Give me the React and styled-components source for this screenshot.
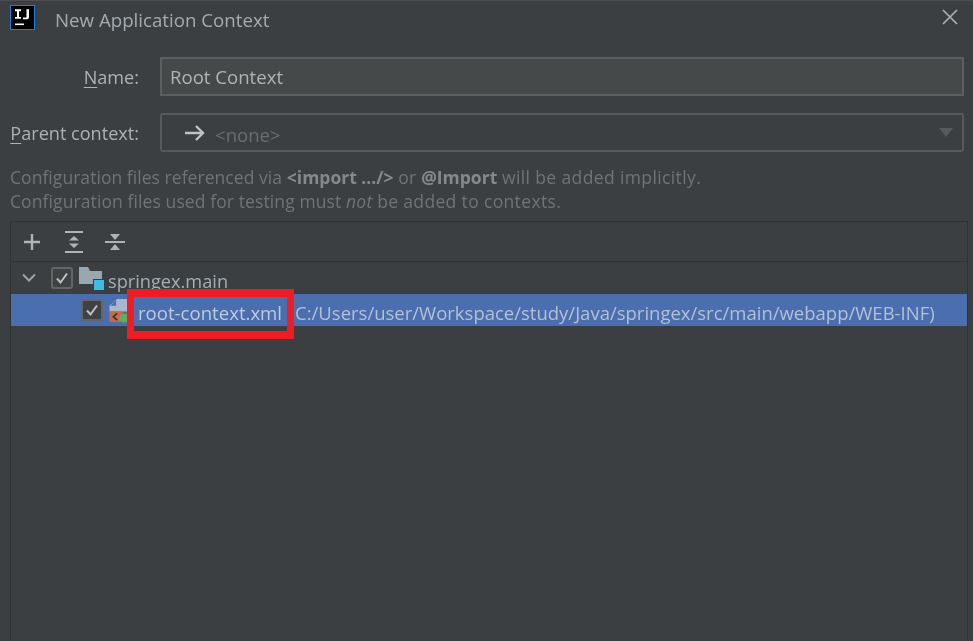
import React from "react";
import styled, { createGlobalStyle } from "styled-components";

const Global = createGlobalStyle`
  html, body { margin: 0; padding: 0; background: #3c3f41; }
  body { font-family: "Open Sans", "Noto Sans", "Liberation Sans", sans-serif; overflow: hidden; }
`;
const Dialog = styled.div`
  width: 973px; height: 641px; box-sizing: border-box; background: #3c3f41; filter: blur(0.35px);
  border-top: 1px solid #4c4f51; display: flex; flex-direction: column; color: #bbbbbb; overflow: hidden;
`;
const TitleBar = styled.header`
  height: 40px; flex: none; display: flex; align-items: center; padding: 0 14px 0 10px; margin-top: -1px;
`;
const Logo = styled.div`
  width: 25px; height: 25px; box-sizing: border-box; background: #000; border: 1px solid #1c7fe0;
  display: block; flex: none; align-self: flex-start; margin-top: 5px;
`;
const Title = styled.h1`
  margin: 0 0 2px 20px; font-size: 18.7px; font-weight: 400; color: #a4abb0; flex: 1;
`;
const CloseBtn = styled.div`
  width: 18px; height: 18px; flex: none; color: #b0b2b3; display: flex; align-self: flex-start; margin-top: 8px;
`;
const Form = styled.div`
  display: grid; grid-template-columns: 129px 804px; column-gap: 21px; row-gap: 17px;
  padding: 17px 0 0 10px; align-items: center;
`;
const Label = styled.label`
  font-size: 18.1px; text-align: right; color: #aeb2b4; white-space: nowrap; u { text-underline-offset: 3px; }
`;
const Input = styled.div`
  height: 39px; box-sizing: border-box; background: #45494a; border: 2px solid #5d6061;
  font-size: 18.6px; color: #b0b4b5; display: flex; align-items: center; padding-left: 8px;
`;
const Combo = styled.div`
  height: 39px; box-sizing: border-box; background: #3c3f41; border: 2px solid #57595a; border-radius: 3px;
  display: flex; align-items: center; padding: 0 9px 0 22px;
`;
const None = styled.span`font-size: 18.6px; color: #6a6e70; margin-left: 9px; flex: 1; padding-top: 3px;`;
const Help = styled.div`
  margin: 13px 0 0 10px; font-size: 17.5px; letter-spacing: 0.2px; line-height: 24px; color: #707476; white-space: nowrap;
  b { font-weight: 700; color: #85898b; letter-spacing: 0; }
  i { font-style: italic; }
`;
const HelpLead = styled.span`letter-spacing: ${p => p.$ls}px;`;
const Panel = styled.section`
  margin: 8px 5px 0 10px; flex: 1; border: 1px solid #323232; border-bottom: none; display: flex; flex-direction: column;
`;
const Toolbar = styled.div`
  height: 40px; flex: none; box-sizing: border-box; border-bottom: 1px solid #323232;
  display: flex; align-items: center; gap: 21.5px; padding: 0 0 0 11px;
`;
const ToolIcon = styled.svg`width: 20px; height: 24px; flex: none; color: #b0b2b3;`;
const Row = styled.div`
  height: 32px; display: flex; align-items: center; position: relative; box-sizing: border-box;
  padding-left: ${p => p.$indent}px; background: ${p => (p.$selected ? "#4b6eaf" : "transparent")};
`;
const Chevron = styled.svg`width: 16px; height: 12px; flex: none; margin-right: 14px; color: #a0a2a3;`;
const Check = styled.div`
  width: 22px; height: 22px; box-sizing: border-box; flex: none; border: 2px solid #636566; border-radius: 3px;
  background: #3f4243; display: flex; align-items: center; justify-content: center; color: #c0c1c1;
`;
const RowText = styled.span`
  font-size: ${p => p.$fs || 18.5}px; white-space: nowrap; color: ${p => p.$c || "#a4afb5"};
  margin-left: ${p => p.$ml || 0}px; padding-top: 5px;
`;
const IconBox = styled.svg`flex: none; margin-left: ${p => p.$ml || 0}px;`;
const Highlight = styled.div`
  position: absolute; left: 116px; top: -5px; width: 167px; height: 50px; box-sizing: border-box;
  border: 8px solid #ee1c25; border-left-width: 7px; border-right-width: 7px; pointer-events: none;
`;

export default function App() {
  return (
    <Dialog>
      <Global />
      <TitleBar>
        <Logo>
          <svg width="23" height="23" viewBox="0 0 23 23">
            <path d="M4 4h6v2H8v6h2v2H4v-2h2V6H4zM12 4h6v8c0 1.5-1 2.5-2.5 2.5H12v-2h3.5V4" fill="#fff" transform="translate(0 -0.5) scale(1 0.95)" />
            <rect x="4" y="17.5" width="9" height="1.6" fill="#fff" />
          </svg>
        </Logo>
        <Title>New Application Context</Title>
        <CloseBtn>
          <svg width="18" height="18" viewBox="0 0 18 18" stroke="currentColor" strokeWidth="1.6" fill="none">
            <path d="M2 2l14 14M16 2L2 16" />
          </svg>
        </CloseBtn>
      </TitleBar>
      <Form>
        <Label><u>N</u>ame:</Label>
        <Input>Root Context</Input>
        <Label><u>P</u>arent context:</Label>
        <Combo>
          <svg width="22" height="18" viewBox="0 0 22 18" fill="none" stroke="#c0c2c3" strokeWidth="2.4">
            <path d="M1 9h18M12 2l7 7-7 7" />
          </svg>
          <None>&lt;none&gt;</None>
          <svg width="14" height="9" viewBox="0 0 14 9"><path d="M0 0h14L7 9z" fill="#585b5c" /></svg>
        </Combo>
      </Form>
      <Help>
        <div><HelpLead $ls={0.05}>Configuration files referenced via</HelpLead> <b>&lt;import .../&gt;</b> or <b>@Import</b> <HelpLead $ls={0.38}>will be added implicitly.</HelpLead></div>
        <div><HelpLead $ls={0.1}>Configuration files used for testing must</HelpLead> <i>not</i> <HelpLead $ls={0.35}>be added to contexts.</HelpLead></div>
      </Help>
      <Panel>
        <Toolbar>
          <ToolIcon viewBox="0 0 20 24" fill="none" stroke="currentColor" strokeWidth="2.4">
            <path d="M2 12h16M10 4v16" />
          </ToolIcon>
          <ToolIcon viewBox="0 0 20 24">
            <path d="M1 2h18M1 22h18" stroke="currentColor" strokeWidth="2" />
            <path d="M10 6l5 4.5H5zM10 18l-5-4.5h10z" fill="currentColor" />
          </ToolIcon>
          <ToolIcon viewBox="0 0 20 24">
            <path d="M0 12h20" stroke="currentColor" strokeWidth="2" />
            <path d="M10 10L5 4h10zM10 14l5 6H5z" fill="currentColor" />
          </ToolIcon>
        </Toolbar>
        <Row $indent={10}>
          <Chevron viewBox="0 0 16 12" fill="none" stroke="currentColor" strokeWidth="2"><path d="M2 2.5l6 6 6-6" /></Chevron>
          <Check>
            <svg width="14" height="14" viewBox="0 0 14 14" fill="none" stroke="currentColor" strokeWidth="2"><path d="M2 7.5l3.5 4L12 2.5" /></svg>
          </Check>
          <IconBox $ml={6} width="25" height="24" viewBox="0 0 25 24">
            <path d="M0 1h9l2 4h12v13H0z" fill="#9aa7b0" />
            <rect x="14" y="13" width="10" height="11" fill="#3c3f41" />
            <rect x="15" y="14" width="10" height="10" fill="#3ebbe8" />
          </IconBox>
          <RowText $ml={4} $fs={18.2}>springex.main</RowText>
        </Row>
        <Row $indent={70} $selected>
          <Check>
            <svg width="14" height="14" viewBox="0 0 14 14" fill="none" stroke="currentColor" strokeWidth="2"><path d="M2 7.5l3.5 4L12 2.5" /></svg>
          </Check>
          <IconBox $ml={6} width="22" height="25" viewBox="0 0 22 26">
            <path d="M8 1h12v13H0V8z" fill="#a9b7c8" />
            <path d="M7 2v6H1z" fill="#4b6eaf" />
            <rect x="0" y="14" width="14" height="11" fill="#c66b45" />
            <path d="M8 16l-4 3.5 4 3.5" fill="none" stroke="#2c2c2c" strokeWidth="1.5" />
            <ellipse cx="16" cy="21" rx="6" ry="4.5" fill="#5faf5f" />
          </IconBox>
          <RowText $ml={7} $fs={18.6} $c="#bfcadd">root-context.xml</RowText>
          <RowText $ml={13} $c="#b3c0d6">C:/Users/user/Workspace/study/Java/springex/src/main/webapp/WEB-INF)</RowText>
          <Highlight />
        </Row>
      </Panel>
    </Dialog>
  );
}
